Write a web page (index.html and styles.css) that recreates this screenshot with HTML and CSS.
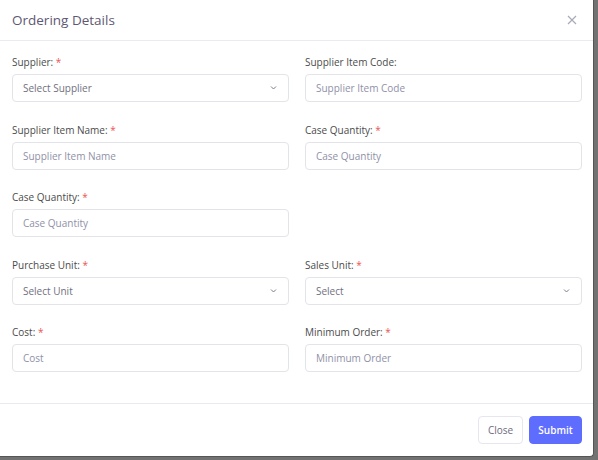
FILE: index.html
```html
<!DOCTYPE html>
<html>
<head>
<meta charset="utf-8">
<link rel="stylesheet" href="styles.css">
</head>
<body>
<div class="modal">
  <div class="modal-header">
    <h5 class="modal-title">Ordering Details</h5>
    <button class="btn-close" aria-label="Close">
      <svg width="10" height="10" viewBox="0 0 10 10"><path d="M1 1L9 9M9 1L1 9" stroke="#a8aab8" stroke-width="1.2" fill="none"/></svg>
    </button>
  </div>
  <div class="modal-body">
    <div class="grid">
      <div class="field">
        <label class="label">Supplier: <span class="req">*</span></label>
        <div class="control select"><span class="ph">Select Supplier</span><svg class="chev" width="7" height="4" viewBox="0 0 7 4"><path d="M1 .5l2.5 2.5 2.5-2.5" stroke="#7d7b8a" stroke-width="1" fill="none"/></svg></div>
      </div>
      <div class="field">
        <label class="label">Supplier Item Code:</label>
        <div class="control"><span class="ph">Supplier Item Code</span></div>
      </div>
      <div class="field">
        <label class="label">Supplier Item Name: <span class="req">*</span></label>
        <div class="control"><span class="ph">Supplier Item Name</span></div>
      </div>
      <div class="field">
        <label class="label">Case Quantity: <span class="req">*</span></label>
        <div class="control"><span class="ph">Case Quantity</span></div>
      </div>
      <div class="field">
        <label class="label">Case Quantity: <span class="req">*</span></label>
        <div class="control"><span class="ph">Case Quantity</span></div>
      </div>
      <div class="field empty"></div>
      <div class="field">
        <label class="label">Purchase Unit: <span class="req">*</span></label>
        <div class="control select"><span class="ph">Select Unit</span><svg class="chev" width="7" height="4" viewBox="0 0 7 4"><path d="M1 .5l2.5 2.5 2.5-2.5" stroke="#7d7b8a" stroke-width="1" fill="none"/></svg></div>
      </div>
      <div class="field">
        <label class="label">Sales Unit: <span class="req">*</span></label>
        <div class="control select"><span class="ph">Select</span><svg class="chev" width="7" height="4" viewBox="0 0 7 4"><path d="M1 .5l2.5 2.5 2.5-2.5" stroke="#7d7b8a" stroke-width="1" fill="none"/></svg></div>
      </div>
      <div class="field">
        <label class="label">Cost: <span class="req">*</span></label>
        <div class="control"><span class="ph">Cost</span></div>
      </div>
      <div class="field">
        <label class="label">Minimum Order: <span class="req">*</span></label>
        <div class="control"><span class="ph">Minimum Order</span></div>
      </div>
    </div>
  </div>
  <div class="modal-footer">
    <button class="btn btn-light">Close</button>
    <button class="btn btn-primary">Submit</button>
  </div>
</div>
</body>
</html>
```

FILE: styles.css
```css
html, body {
  margin: 0;
  padding: 0;
  background: #727272;
  width: 598px;
  height: 460px;
  overflow: hidden;
}
body {
  font-family: "Open Sans", "Noto Sans", sans-serif;
}
.modal {
  width: 593px;
  height: 456px;
  background: #fff;
  border-right: 1px solid #555;
  border-bottom: 1px solid #555;
  border-bottom-right-radius: 4px;
  display: flex;
  flex-direction: column;
}
.modal-header {
  height: 40px;
  border-bottom: 1px solid #ebe9f1;
  display: flex;
  align-items: center;
  justify-content: space-between;
  padding: 0 16px 0 12px;
}
.modal-title {
  margin: 0;
  font-size: 13.5px;
  font-weight: 500;
  color: #5e5873;
  letter-spacing: 0;
}
.btn-close {
  border: 0;
  background: none;
  padding: 0;
  width: 10px;
  height: 10px;
  display: flex;
}
.modal-body {
  padding: 13px 12px 0 12px;
  height: 363px;
  box-sizing: border-box;
  border-bottom: 1px solid #ebe9f1;
}
.grid {
  display: grid;
  grid-template-columns: 277px 277px;
  column-gap: 16px;
  row-gap: 19.5px;
}
.field {
  display: flex;
  flex-direction: column;
  height: 48px;
}
.label {
  font-size: 10px;
  line-height: 16px;
  color: #4b4b4b;
  margin-bottom: 4px;
}
.req {
  color: #ea5455;
}
.control {
  height: 28px;
  box-sizing: border-box;
  border: 1px solid #e3e3ea;
  border-radius: 4px;
  display: flex;
  align-items: center;
  padding: 0 10px;
}
.select {
  justify-content: space-between;
  padding-right: 11px;
}
.ph {
  font-size: 10px;
  color: #8f91a8;
}
.select .ph {
  color: #6f6f7e;
}
.chev {
  display: block;
}
.modal-footer {
  flex: 1;
  display: flex;
  justify-content: flex-end;
  align-items: center;
  gap: 6px;
  padding: 0 11px 0 0;
}
.btn {
  height: 28px;
  font-family: "Open Sans", "Noto Sans", sans-serif;
  font-size: 10px;
  border-radius: 4px;
  padding: 0 8px;
  cursor: pointer;
}
.btn-light {
  background: #fff;
  border: 1px solid #e6e6ee;
  color: #6e6b7b;
  width: 45px;
}
.btn-primary {
  background: #5f6dff;
  border: 1px solid #5f6dff;
  color: #fff;
  width: 53px;
  font-weight: 600;
}
```
